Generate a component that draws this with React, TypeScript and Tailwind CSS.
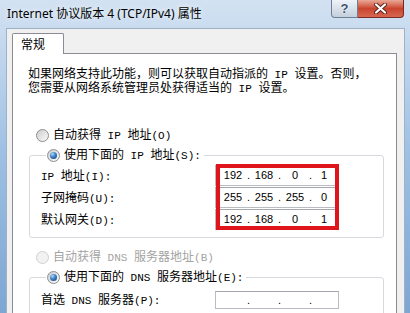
import React from "react";

function Radio({ checked = false, disabled = false }: { checked?: boolean; disabled?: boolean }) {
  return (
    <span
      className={
        disabled
          ? "flex h-[13px] w-[13px] shrink-0 items-center justify-center rounded-full border border-[#d0d0d0] bg-[#f2f2f2]"
          : "flex h-[13px] w-[13px] shrink-0 items-center justify-center rounded-full border border-[#8d8d8d] bg-gradient-to-br from-[#cdcdcd] to-[#fbfbfb]"
      }
    >
      {checked && (
        <span className="h-[7px] w-[7px] rounded-full bg-[radial-gradient(circle_at_35%_30%,#a8d8ff_0%,#3b7fc4_45%,#113a6b_100%)]" />
      )}
    </span>
  );
}

function L({ children }: { children: React.ReactNode }) {
  return <span className="whitespace-pre font-['Liberation_Mono',monospace] text-[11px]">{children}</span>;
}

function IpBox({ parts, tall }: { parts?: string[]; tall: boolean }) {
  const p = parts ?? ["", "", "", ""];
  return (
    <div
      className={
        (tall ? "h-[21px] " : "h-[18px] ") +
        "flex w-[124px] items-center border border-[#b9bcc2] border-t-[#a3a6ad] bg-white pl-[4px] font-['Liberation_Sans',sans-serif] text-[11px] leading-none text-black"
      }
    >
      <span className="w-[26px] text-center">{p[0]}</span>
      <span className="w-[5px] text-center">.</span>
      <span className="w-[26px] text-center">{p[1]}</span>
      <span className="w-[5px] text-center">.</span>
      <span className="w-[26px] text-center">{p[2]}</span>
      <span className="w-[5px] text-center">.</span>
      <span className="w-[22px] text-center">{p[3]}</span>
    </div>
  );
}

export default function App() {
  return (
    <div className="relative flex h-[313px] w-[410px] flex-col overflow-hidden bg-gradient-to-b from-[#d3e2f2] via-[#9dbfe3] to-[#7ea6d2]">
      {/* title bar */}
      <div className="flex h-[28px] shrink-0 items-start">
        <div className="pl-[7px] pt-[5px] font-['Noto_Sans','Noto_Sans_CJK_SC',sans-serif] text-[12px] leading-[18px] text-black [text-shadow:0_0_6px_#ffffff]">
          Internet 协议版本 4 (TCP/IPv4) 属性
        </div>
        <div className="ml-auto mr-[6px] flex h-[18px]">
          <div className="flex w-[27px] items-center justify-center rounded-bl-[4px] border border-t-0 border-[#6f8096] bg-gradient-to-b from-[#eef3f8] to-[#c3cfdd] font-['Liberation_Sans',sans-serif] text-[13px] font-bold leading-none text-[#3e5670] [text-shadow:0_0_2px_#ffffff]">
            ?
          </div>
          <div className="flex w-[46px] items-center justify-center rounded-br-[4px] border border-l-0 border-t-0 border-[#7a2a20] bg-gradient-to-b from-[#e9a796] via-[#c9442f] to-[#d8664f]">
            <svg width="15" height="11" viewBox="0 0 15 11">
              <path d="M3 1.5 L12 9.5 M12 1.5 L3 9.5" stroke="#5b231b" strokeWidth="4" strokeLinecap="round" fill="none" />
              <path d="M3 1.5 L12 9.5 M12 1.5 L3 9.5" stroke="#ffffff" strokeWidth="2.2" strokeLinecap="round" fill="none" />
            </svg>
          </div>
        </div>
      </div>

      {/* body */}
      <div className="ml-[6px] mr-[5px] flex flex-1 flex-col border border-b-0 border-[#9fb1c6] bg-[#f0f0f0] pt-[4px] font-['Noto_Sans_CJK_SC',sans-serif] text-[12px] text-black">
        {/* tab */}
        <div className="relative z-10 -mb-px ml-[5px] flex h-[21px] w-[52px] items-center rounded-t-[2px] border border-b-0 border-[#898c95] bg-white pl-[8px]">
          常规
        </div>
        {/* panel */}
        <div className="ml-[5px] mr-[7px] flex-1 border border-[#898c95] bg-white">
          <p className="whitespace-nowrap pl-[15px] pt-[13px] leading-[12px]">
            如果网络支持此功能，则可以获取自动指派的<L> IP </L>设置。否则，
            <br />
            您需要从网络系统管理员处获得适当的<L> IP </L>设置。
          </p>

          <div className="ml-[23px] mt-[30px] flex h-[20px] items-center gap-[4px]">
            <Radio />
            <span>
              自动获得<L> IP </L>地址<L>(O)</L>
            </span>
          </div>

          <fieldset className="ml-[16px] mr-[12px] rounded-[3px] border border-[#d6dade] pb-[7px] pl-[11px]">
            <legend className="ml-[5px] pl-[1px] pr-[3px]">
              <span className="flex h-[20px] items-center gap-[4px]">
                <Radio checked />
                <span>
                  使用下面的<L> IP </L>地址<L>(S):</L>
                </span>
              </span>
            </legend>
            <div className="flex">
              <div className="flex w-[174px] flex-col gap-[1px]">
                <div className="flex h-[21px] items-center">
                  <span>
                    <L>IP </L>地址<L>(I):</L>
                  </span>
                </div>
                <div className="flex h-[21px] items-center">
                  <span>
                    子网掩码<L>(U):</L>
                  </span>
                </div>
                <div className="flex h-[21px] items-center">
                  <span>
                    默认网关<L>(D):</L>
                  </span>
                </div>
              </div>
              <div className="relative flex flex-col gap-[1px]">
                <IpBox tall parts={["192", "168", "0", "1"]} />
                <IpBox tall parts={["255", "255", "255", "0"]} />
                <IpBox tall parts={["192", "168", "0", "1"]} />
                <div className="pointer-events-none absolute left-[1px] top-[-1px] h-[66px] w-[123px] border-[4px] border-[#e0141b]" />
              </div>
            </div>
          </fieldset>

          <div className="ml-[23px] mt-[9px] flex h-[20px] items-center gap-[4px] text-[#a3a3a3]">
            <Radio disabled />
            <span>
              自动获得<L> DNS </L>服务器地址<L>(B)</L>
            </span>
          </div>

          <fieldset className="ml-[16px] mr-[12px] rounded-[3px] border border-[#d6dade] pb-[7px] pl-[11px] pt-[4px]">
            <legend className="ml-[5px] pl-[1px] pr-[3px]">
              <span className="flex h-[20px] items-center gap-[4px]">
                <Radio checked />
                <span>
                  使用下面的<L> DNS </L>服务器地址<L>(E):</L>
                </span>
              </span>
            </legend>
            <div className="flex">
              <div className="flex w-[174px] flex-col gap-[5px]">
                <div className="flex h-[18px] items-center">
                  <span>
                    首选<L> DNS </L>服务器<L>(P):</L>
                  </span>
                </div>
                <div className="h-[18px]" />
              </div>
              <div className="flex flex-col gap-[5px]">
                <IpBox tall={false} />
                <IpBox tall={false} />
              </div>
            </div>
          </fieldset>
        </div>
      </div>
    </div>
  );
}
